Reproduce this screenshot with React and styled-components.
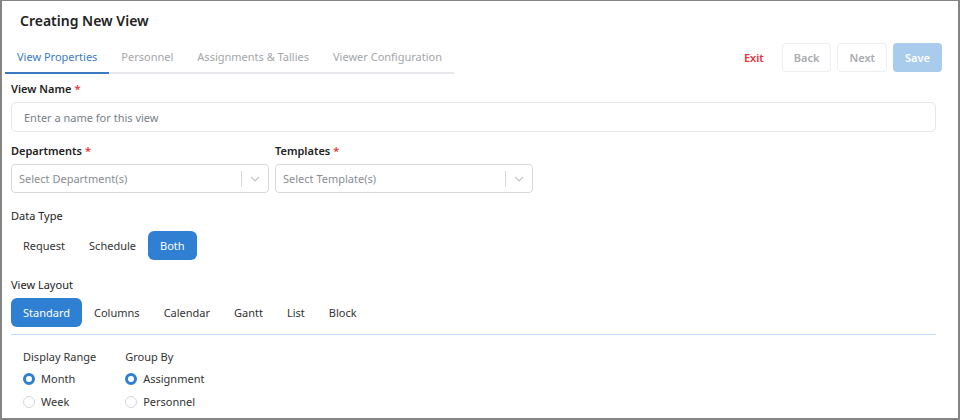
import React from "react";
import styled, { createGlobalStyle } from "styled-components";

const Global = createGlobalStyle`
  html, body { margin: 0; padding: 0; background: #fff; }
  body { font-family: "Noto Sans", "Open Sans", sans-serif; color: #222; }
  * { box-sizing: border-box; }
`;

const Frame = styled.div`
  width: 960px;
  height: 420px;
  border: 2px solid #858585;
  border-top-width: 1px;
  background: #fff;
  overflow: hidden;
  padding: 0 22px 0 9px;
`;

const Title = styled.h1`
  margin: 0;
  height: 38px;
  display: flex;
  align-items: center;
  padding-left: 9px;
  font-size: 14px;
  font-weight: 600;
  color: #222;
`;

const TopBar = styled.div`
  display: flex;
  align-items: flex-end;
  justify-content: space-between;
  margin: 0 -6px;
  height: 35px;
`;

const TabList = styled.div`
  display: flex;
  border-bottom: 2px solid #e6e8ec;
`;

const Tab = styled.div`
  padding: 0 12px;
  height: 33px;
  display: flex;
  align-items: center;
  font-size: 11px;
  color: ${(p) => (p.$active ? "#3b7bc2" : "#a3a6aa")};
  margin-bottom: -2px;
  border-bottom: 2px solid ${(p) => (p.$active ? "#3b7bc2" : "transparent")};
`;

const Actions = styled.div`
  display: flex;
  gap: 6px;
  align-self: flex-start;
  padding-top: 4px;
`;

const ActionButton = styled.button`
  height: 29px;
  padding: 0 11px;
  font-family: inherit;
  font-size: 11px;
  font-weight: 600;
  border-radius: 4px;
  border: 1px solid ${(p) => (p.$variant === "ghost" ? "#eceef1" : "transparent")};
  background: ${(p) => (p.$variant === "primary" ? "#a9cbec" : "#fff")};
  color: ${(p) =>
    p.$variant === "primary" ? "#fff" : p.$variant === "danger" ? "#e8333c" : "#a9abae"};
`;

const Field = styled.div`
  display: flex;
  flex-direction: column;
`;

const Label = styled.label`
  font-size: 11px;
  font-weight: ${(p) => (p.$bold ? 600 : 400)};
  color: #222;
  height: 20px;
  display: flex;
  align-items: center;
  gap: 3px;
`;

const Req = styled.span`
  color: #e53935;
`;

const Input = styled.div`
  height: 30px;
  border: 1px solid #e3e6ec;
  border-radius: 5px;
  display: flex;
  align-items: center;
  padding: 0 12px;
  font-size: 11px;
  color: #7a7f87;
`;

const Row = styled.div`
  display: flex;
  gap: 6px;
`;

const Select = styled.div`
  width: 258px;
  height: 29px;
  border: 1px solid #d6d8dc;
  border-radius: 4px;
  display: flex;
  align-items: center;
  font-size: 11px;
  color: #8a8d92;
`;

const SelectValue = styled.div`
  flex: 1;
  padding-left: 7px;
`;

const Separator = styled.span`
  width: 1px;
  height: 16px;
  background: #d6d8dc;
`;

const Chevron = styled.span`
  width: 26px;
  display: flex;
  justify-content: center;
  color: #c4c6ca;
`;

const Segmented = styled.div`
  display: flex;
`;

const SegButton = styled.button`
  height: 29px;
  padding: 0 12px;
  border: none;
  border-radius: 6px;
  font-family: inherit;
  font-size: 11px;
  background: ${(p) => (p.$active ? "#2f7fd2" : "transparent")};
  color: ${(p) => (p.$active ? "#fff" : "#333")};
`;

const Divider = styled.div`
  height: 1px;
  background: #c4dcf6;
`;

const Options = styled.div`
  display: flex;
  gap: 29px;
  padding-left: 12px;
`;

const OptionGroup = styled.div`
  display: flex;
  flex-direction: column;
`;

const GroupTitle = styled.div`
  font-size: 11px;
  color: #333;
  height: 21px;
  display: flex;
  align-items: center;
`;

const RadioRow = styled.div`
  height: 23px;
  display: flex;
  align-items: center;
  gap: 6px;
  font-size: 11px;
  color: #333;
`;

const RadioDot = styled.span`
  width: 12px;
  height: 12px;
  border-radius: 50%;
  border: ${(p) => (p.$checked ? "3.5px solid #2f7fd2" : "1px solid #d4d8de")};
  background: #fff;
`;

const Spacer = styled.div`
  height: ${(p) => p.$h}px;
`;

const Chev = () => (
  <svg width="10" height="6" viewBox="0 0 10 6" fill="none">
    <path d="M1 1l4 4 4-4" stroke="currentColor" strokeWidth="1.2" />
  </svg>
);

const Radio = ({ checked, children }) => (
  <RadioRow>
    <RadioDot $checked={checked} />
    {children}
  </RadioRow>
);

export default function App() {
  return (
    <>
      <Global />
      <Frame>
        <Title>Creating New View</Title>
        <TopBar>
          <TabList>
            <Tab $active>View Properties</Tab>
            <Tab>Personnel</Tab>
            <Tab>Assignments &amp; Tallies</Tab>
            <Tab>Viewer Configuration</Tab>
          </TabList>
          <Actions>
            <ActionButton $variant="danger">Exit</ActionButton>
            <ActionButton $variant="ghost">Back</ActionButton>
            <ActionButton $variant="ghost">Next</ActionButton>
            <ActionButton $variant="primary">Save</ActionButton>
          </Actions>
        </TopBar>
        <Spacer $h={4} />
        <Field>
          <Label $bold>
            View Name <Req>*</Req>
          </Label>
          <Spacer $h={4} />
          <Input>Enter a name for this view</Input>
        </Field>
        <Spacer $h={8} />
        <Row>
          <Field>
            <Label $bold>
              Departments <Req>*</Req>
            </Label>
            <Spacer $h={4} />
            <Select>
              <SelectValue>Select Department(s)</SelectValue>
              <Separator />
              <Chevron>
                <Chev />
              </Chevron>
            </Select>
          </Field>
          <Field>
            <Label $bold>
              Templates <Req>*</Req>
            </Label>
            <Spacer $h={4} />
            <Select>
              <SelectValue>Select Template(s)</SelectValue>
              <Separator />
              <Chevron>
                <Chev />
              </Chevron>
            </Select>
          </Field>
        </Row>
        <Spacer $h={12} />
        <Field>
          <Label>Data Type</Label>
          <Spacer $h={6} />
          <Segmented>
            <SegButton>Request</SegButton>
            <SegButton>Schedule</SegButton>
            <SegButton $active>Both</SegButton>
          </Segmented>
        </Field>
        <Spacer $h={14} />
        <Field>
          <Label>View Layout</Label>
          <Spacer $h={4} />
          <Segmented>
            <SegButton $active>Standard</SegButton>
            <SegButton>Columns</SegButton>
            <SegButton>Calendar</SegButton>
            <SegButton>Gantt</SegButton>
            <SegButton>List</SegButton>
            <SegButton>Block</SegButton>
          </Segmented>
        </Field>
        <Spacer $h={7} />
        <Divider />
        <Spacer $h={11} />
        <Options>
          <OptionGroup>
            <GroupTitle>Display Range</GroupTitle>
            <Radio checked>Month</Radio>
            <Radio>Week</Radio>
          </OptionGroup>
          <OptionGroup>
            <GroupTitle>Group By</GroupTitle>
            <Radio checked>Assignment</Radio>
            <Radio>Personnel</Radio>
          </OptionGroup>
        </Options>
      </Frame>
    </>
  );
}
